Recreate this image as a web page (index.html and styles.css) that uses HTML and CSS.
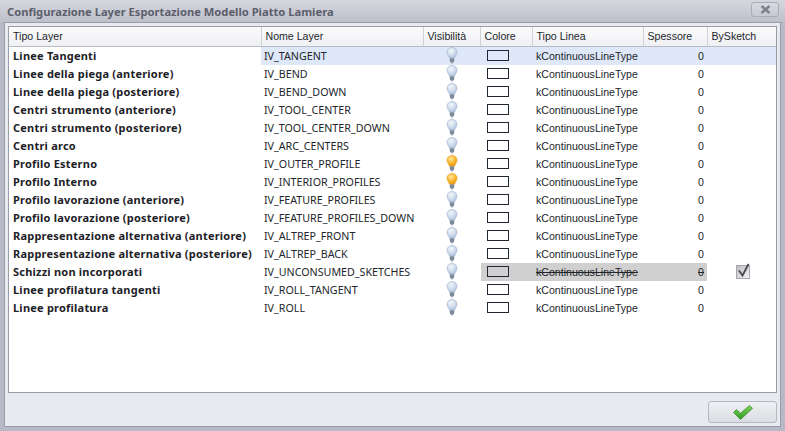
FILE: index.html
```html
<!DOCTYPE html>
<html lang="it">
<head>
<meta charset="utf-8">
<title>Configurazione Layer</title>
<link rel="stylesheet" href="styles.css">
</head>
<body>
<svg class="defs" width="0" height="0" aria-hidden="true">
  <defs>
    <radialGradient id="gb" cx="0.4" cy="0.3" r="0.8"><stop offset="0" stop-color="#f4f7fb"/><stop offset="0.6" stop-color="#c9d7ea"/><stop offset="1" stop-color="#9db2cf"/></radialGradient>
    <radialGradient id="gy" cx="0.4" cy="0.3" r="0.8"><stop offset="0" stop-color="#ffe9a0"/><stop offset="0.55" stop-color="#fbb52a"/><stop offset="1" stop-color="#e48a0c"/></radialGradient>
    <linearGradient id="gc" x1="0" y1="0" x2="0" y2="1"><stop offset="0" stop-color="#7fd45a"/><stop offset="1" stop-color="#2f9a22"/></linearGradient>
    <symbol id="bulb-off" viewBox="0 0 12 17">
      <path d="M6 .5C3 .5 1 2.600 1 5.200c0 2.300 1.800 3.500 2.400 6h5.200c.6-2.500 2.400-3.700 2.400-6C11 2.600 9 .5 6 .5z" fill="url(#gb)" stroke="#a9bad2" stroke-width=".7"/>
      <rect x="3.800" y="11.200" width="4.400" height="4" rx="1" fill="#7e8a9c"/>
      <rect x="4.800" y="15" width="2.400" height="1.500" rx=".7" fill="#98a2b0"/>
    </symbol>
    <symbol id="bulb-on" viewBox="0 0 12 17">
      <path d="M6 .5C3 .5 1 2.600 1 5.200c0 2.300 1.800 3.500 2.400 6h5.200c.6-2.500 2.400-3.700 2.400-6C11 2.600 9 .5 6 .5z" fill="url(#gy)" stroke="#e9a32a" stroke-width=".7"/>
      <rect x="3.800" y="11.200" width="4.400" height="4" rx="1" fill="#7e8a9c"/>
      <rect x="4.800" y="15" width="2.400" height="1.500" rx=".7" fill="#98a2b0"/>
    </symbol>
  </defs>
</svg>
<div class="window">
  <header class="titlebar">
    <h1 class="title">Configurazione Layer Esportazione Modello Piatto Lamiera</h1>
    <button class="close" type="button" aria-label="Chiudi">
      <svg width="11" height="9" viewBox="0 0 11 9"><path d="M1.500 1l8 7M9.500 1l-8 7" stroke="#7d808c" stroke-width="2.400" fill="none"/></svg>
    </button>
  </header>
  <main class="panel">
    <div class="gridbox">
      <table class="grid">
        <colgroup>
          <col class="c1"><col class="c2"><col class="c3"><col class="c4"><col class="c5"><col class="c6"><col class="c7">
        </colgroup>
        <thead>
          <tr><th>Tipo Layer</th><th>Nome Layer</th><th>Visibilità</th><th>Colore</th><th>Tipo Linea</th><th>Spessore</th><th>BySketch</th></tr>
        </thead>
        <tbody>
          <tr class="focus"><td class="name">Linee Tangenti</td><td class="sel">IV_TANGENT</td><td class="sel ctr"><svg class="bulb"><use href="#bulb-off"/></svg></td><td class="sel"><span class="swatch"></span></td><td class="sel">kContinuousLineType</td><td class="sel num">0</td><td class="sel"></td></tr>
          <tr><td class="name">Linee della piega (anteriore)</td><td>IV_BEND</td><td class="ctr"><svg class="bulb"><use href="#bulb-off"/></svg></td><td><span class="swatch"></span></td><td>kContinuousLineType</td><td class="num">0</td><td></td></tr>
          <tr><td class="name">Linee della piega (posteriore)</td><td>IV_BEND_DOWN</td><td class="ctr"><svg class="bulb"><use href="#bulb-off"/></svg></td><td><span class="swatch"></span></td><td>kContinuousLineType</td><td class="num">0</td><td></td></tr>
          <tr><td class="name">Centri strumento (anteriore)</td><td>IV_TOOL_CENTER</td><td class="ctr"><svg class="bulb"><use href="#bulb-off"/></svg></td><td><span class="swatch"></span></td><td>kContinuousLineType</td><td class="num">0</td><td></td></tr>
          <tr><td class="name">Centri strumento (posteriore)</td><td>IV_TOOL_CENTER_DOWN</td><td class="ctr"><svg class="bulb"><use href="#bulb-off"/></svg></td><td><span class="swatch"></span></td><td>kContinuousLineType</td><td class="num">0</td><td></td></tr>
          <tr><td class="name">Centri arco</td><td>IV_ARC_CENTERS</td><td class="ctr"><svg class="bulb"><use href="#bulb-off"/></svg></td><td><span class="swatch"></span></td><td>kContinuousLineType</td><td class="num">0</td><td></td></tr>
          <tr><td class="name">Profilo Esterno</td><td>IV_OUTER_PROFILE</td><td class="ctr"><svg class="bulb"><use href="#bulb-on"/></svg></td><td><span class="swatch"></span></td><td>kContinuousLineType</td><td class="num">0</td><td></td></tr>
          <tr><td class="name">Profilo Interno</td><td>IV_INTERIOR_PROFILES</td><td class="ctr"><svg class="bulb"><use href="#bulb-on"/></svg></td><td><span class="swatch"></span></td><td>kContinuousLineType</td><td class="num">0</td><td></td></tr>
          <tr><td class="name">Profilo lavorazione (anteriore)</td><td>IV_FEATURE_PROFILES</td><td class="ctr"><svg class="bulb"><use href="#bulb-off"/></svg></td><td><span class="swatch"></span></td><td>kContinuousLineType</td><td class="num">0</td><td></td></tr>
          <tr><td class="name">Profilo lavorazione (posteriore)</td><td>IV_FEATURE_PROFILES_DOWN</td><td class="ctr"><svg class="bulb"><use href="#bulb-off"/></svg></td><td><span class="swatch"></span></td><td>kContinuousLineType</td><td class="num">0</td><td></td></tr>
          <tr><td class="name">Rappresentazione alternativa (anteriore)</td><td>IV_ALTREP_FRONT</td><td class="ctr"><svg class="bulb"><use href="#bulb-off"/></svg></td><td><span class="swatch"></span></td><td>kContinuousLineType</td><td class="num">0</td><td></td></tr>
          <tr><td class="name">Rappresentazione alternativa (posteriore)</td><td>IV_ALTREP_BACK</td><td class="ctr"><svg class="bulb"><use href="#bulb-off"/></svg></td><td><span class="swatch"></span></td><td>kContinuousLineType</td><td class="num">0</td><td></td></tr>
          <tr><td class="name">Schizzi non incorporati</td><td>IV_UNCONSUMED_SKETCHES</td><td class="ctr"><svg class="bulb"><use href="#bulb-off"/></svg></td><td class="off off-first"><span class="swatch"></span></td><td class="off strike">kContinuousLineType</td><td class="off strike num">0</td><td class="ctr"><span class="check"><svg width="17" height="17" viewBox="0 0 17 17"><path d="M4 7.500l3.500 5L13.500 1" fill="none" stroke="#4a4a4e" stroke-width="1.800"/></svg></span></td></tr>
          <tr><td class="name">Linee profilatura tangenti</td><td>IV_ROLL_TANGENT</td><td class="ctr"><svg class="bulb"><use href="#bulb-off"/></svg></td><td><span class="swatch"></span></td><td>kContinuousLineType</td><td class="num">0</td><td></td></tr>
          <tr><td class="name">Linee profilatura</td><td>IV_ROLL</td><td class="ctr"><svg class="bulb"><use href="#bulb-off"/></svg></td><td><span class="swatch"></span></td><td>kContinuousLineType</td><td class="num">0</td><td></td></tr>
        </tbody>
      </table>
    </div>
    <footer class="footer">
      <button class="ok" type="button" aria-label="OK">
        <svg width="22" height="17" viewBox="0 0 22 17"><path d="M1.500 8.500l3-3 4 3.800L17.500 1.500l3 2.800L8.500 15.500z" fill="url(#gc)" stroke="#3f8f2c" stroke-width=".8"/></svg>
      </button>
    </footer>
  </main>
</div>
</body>
</html>
```
FILE: styles.css
```css
* { box-sizing: border-box; }
html, body { margin: 0; padding: 0; }
body { width: 785px; height: 431px; overflow: hidden; font-family: "Liberation Sans", "Noto Sans", sans-serif; font-size: 10.600px; color: #22262b; }
.defs { position: absolute; }
.window {
  width: 785px; height: 431px; display: flex; flex-direction: column;
  background: #b7b9c6; padding: 0 4px 4px;
}
.titlebar {
  flex: 0 0 22px; display: flex; align-items: center; justify-content: space-between;
  margin: 0 -4px; padding: 0 6px 0 7px;
  background: linear-gradient(#d6d7de, #bdbfcb);
}
.title { margin: 0; font-family: "Noto Sans", sans-serif; font-size: 11.200px; font-weight: 700; color: #5b5e6b; white-space: nowrap; }
.close {
  width: 28px; height: 15px; margin-top: -3px; padding: 0; display: flex; align-items: center; justify-content: center;
  border: 1px solid #a9abb7; border-radius: 3px; background: linear-gradient(#d9dae1, #c6c8d2);
}
.panel {
  flex: 1; display: flex; flex-direction: column; min-height: 0;
  background: #e9eaef; border: 1px solid #9a9ca8; padding: 3px 3px 0;
}
.gridbox { height: 367px; flex: none; background: #fff; border: 1px solid #9a9ca8; overflow: hidden; }
.grid { border-collapse: collapse; table-layout: fixed; width: 767px; }
.c1 { width: 252px; } .c2 { width: 162px; } .c3 { width: 57px; } .c4 { width: 52px; }
.c5 { width: 111px; } .c6 { width: 64px; } .c7 { width: 69px; }
th {
  height: 19px; padding: 0 4px; font-weight: 400; font-size: 10.600px; text-align: left; white-space: nowrap;
  background: linear-gradient(#fbfbfc, #eff0f3);
  border-right: 1px solid #d0d2da; border-bottom: 1px solid #b8bac4;
}
th:last-child { border-right: 0; }
td { height: 18px; padding: 0 3px; white-space: nowrap; overflow: hidden; font-size: 10.600px; line-height: 18px; }
td:nth-child(2) { font-family: "Noto Sans", sans-serif; font-size: 10.700px; }
td:nth-child(5) { padding-left: 4px; }
td:nth-child(4) { padding-left: 7px; }
.name { font-family: "Noto Sans", sans-serif; font-size: 11px; letter-spacing: .22px; font-weight: 700; padding-left: 4px; color: #1d2126; }
.sel { background: #dfe8f9; }
.ctr { text-align: center; }
.num { text-align: right; }
.off { background: #d0d0d0; }
.off-first { box-shadow: inset 1px 0 #fff; }
.strike { text-decoration: line-through; }
.bulb { width: 12px; height: 17px; display: block; margin: 0 auto; }
.swatch { display: block; width: 22px; height: 11px; border: 1px solid #1f2733; background: transparent; }
.check { display: block; width: 14px; height: 14px; margin: 0 auto; position: relative; left: 1px; background: linear-gradient(135deg, #bdbdc2, #f4f4f6); border: 1px solid #a6a6ac; }
.check svg { position: absolute; left: -2px; top: -3px; }
.footer { flex: 1; display: flex; justify-content: flex-end; align-items: flex-start; padding-top: 8px; }
.ok {
  width: 69px; height: 22px; padding: 0; display: flex; align-items: center; justify-content: center;
  border: 1px solid #b5b7c2; border-radius: 3px; background: linear-gradient(#eff0f3, #dcdde3);
}
```
